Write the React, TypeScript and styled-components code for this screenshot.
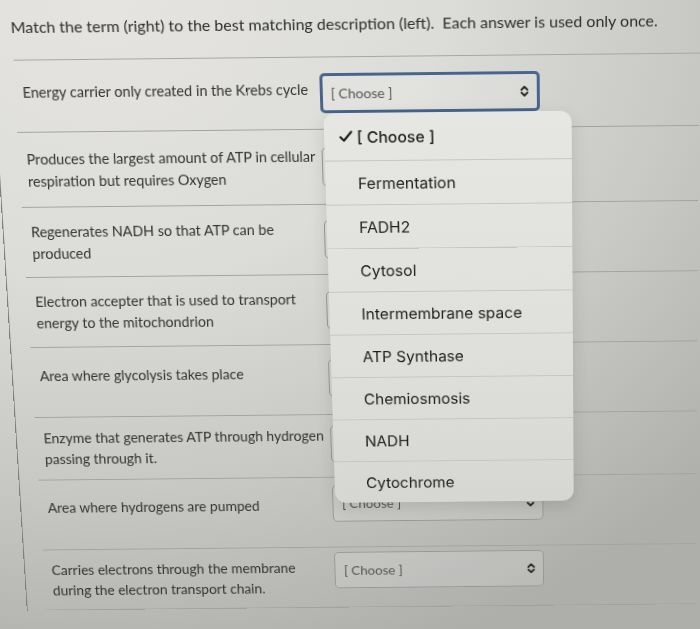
import React from 'react'
import styled, { createGlobalStyle } from 'styled-components'

const GlobalStyle = createGlobalStyle`
  html, body {
    margin: 0;
    padding: 0;
  }
  body {
    font-family: Lato, "Liberation Sans", sans-serif;
    background: #cfcfcb;
  }
`

const Page = styled.div`
  position: relative;
  width: 700px;
  height: 629px;
  overflow: hidden;
  background: radial-gradient(ellipse 120% 110% at 15% 0%, #e5e4e0 0%, #dcdcd8 40%, #c8c9c5 70%, #aeafab 100%);
`
// the reference is a photo of a screen: keystone tilt plus a small roll
const Sheet = styled.div`
  transform-origin: 520px 0;
  transform: perspective(1000px) rotateX(-5.7deg) rotateZ(-0.6deg);
  padding-top: 12px;
`
const Title = styled.div`
  padding-left: 9px;
  font-size: 16px;
  line-height: 20px;
  color: #2e2e2e;
  margin-bottom: 23px;
  white-space: nowrap;
`
const Divider = styled.div`
  margin-left: 10px;
  border-top: 1px solid #a6a6a2;
`
const List = styled.div`
  margin-left: -12px;
  border-left: 1px solid #7f807c;
`
const Row = styled.div<{ $h: number }>`
  display: flex;
  align-items: center;
  height: ${p => p.$h}px;
  margin-left: 20px;
  border-bottom: 1px solid #a2a29e;
  box-sizing: border-box;
`
const Desc = styled.div<{ $lift: number }>`
  width: 308px;
  box-sizing: border-box;
  padding-left: 8px;
  margin-bottom: ${p => p.$lift * 2}px;
  font-size: 14.6px;
  line-height: 23px;
  color: #333;
`
const SelectWrap = styled.div<{ $lift: number }>`
  position: relative;
  margin-bottom: ${p => p.$lift * 2}px;
`
const SelectBox = styled.div<{ $focus?: boolean }>`
  display: flex;
  align-items: center;
  justify-content: space-between;
  width: 222px;
  height: 41px;
  box-sizing: border-box;
  padding: 0 8px 0 ${p => (p.$focus ? 8 : 9)}px;
  border: ${p => (p.$focus ? '3px solid #47648e' : '1px solid #959896')};
  border-radius: 5px;
  background: rgba(255, 255, 255, 0.14);
  font-size: 14px;
  color: #555;
`
const Menu = styled.div`
  position: absolute;
  top: 100%;
  left: 3px;
  width: 251px;
  z-index: 10;
  border-radius: 12px;
  background: linear-gradient(180deg, #e6e6e2 0%, #dfdfdb 60%, #d6d6d2 100%);
  box-shadow: 0 6px 18px rgba(0, 0, 0, 0.12);
  overflow: hidden;
`
const Option = styled.div<{ $first?: boolean }>`
  display: flex;
  align-items: center;
  height: ${p => (p.$first ? 49 : 46)}px;
  padding-left: 15px;
  border-top: ${p => (p.$first ? 'none' : '1px solid #c5c5c1')};
  box-sizing: border-box;
  font-family: Inter, "Open Sans", sans-serif;
  font-size: 16px;
  font-weight: ${p => (p.$first ? 500 : 400)};
  color: #1d1d1d;
`
const CheckSlot = styled.span`
  display: inline-flex;
  width: 18px;
`

const UpDown = () => (
  <svg width="9" height="13" viewBox="0 0 9 13">
    <path d="M1.5 5 L4.5 2 L7.5 5 M1.5 8 L4.5 11 L7.5 8" fill="none" stroke="#2a2a2a" strokeWidth="2" strokeLinecap="round" strokeLinejoin="round" />
  </svg>
)

const Check = () => (
  <svg width="14" height="13" viewBox="0 0 14 13">
    <path d="M1.5 7 L5 10.5 L12.5 1.5" fill="none" stroke="#1d1d1d" strokeWidth="2.2" strokeLinecap="round" strokeLinejoin="round" />
  </svg>
)

const options = [
  'Fermentation',
  'FADH2',
  'Cytosol',
  'Intermembrane space',
  'ATP Synthase',
  'Chemiosmosis',
  'NADH',
  'Cytochrome',
]

const questions = [
  { text: 'Energy carrier only created in the Krebs cycle', h: 74, lift: 4, selLift: 0 },
  { text: 'Produces the largest amount of ATP in cellular respiration but requires Oxygen', h: 78, lift: 0, selLift: 0 },
  { text: 'Regenerates NADH so that ATP can be produced', h: 74, lift: 0, selLift: 0 },
  { text: 'Electron accepter that is used to transport energy to the mitochondrion', h: 75, lift: 0, selLift: 0 },
  { text: 'Area where glycolysis takes place', h: 76, lift: 7, selLift: 2 },
  { text: 'Enzyme that generates ATP through hydrogen passing through it.', h: 69, lift: 0, selLift: 3 },
  { text: 'Area where hydrogens are pumped', h: 78, lift: 8, selLift: 10 },
  { text: 'Carries electrons through the membrane during the electron transport chain.', h: 68, lift: 0, selLift: 8 },
]

const App: React.FC = () => (
  <Page>
    <GlobalStyle />
    <Sheet>
      <Title>Match the term (right) to the best matching description (left).&nbsp; Each answer is used only once.</Title>
      <Divider />
      <List>
        {questions.map((q, i) => (
          <Row key={i} $h={q.h}>
            <Desc $lift={q.lift}>{q.text}</Desc>
            <SelectWrap $lift={q.selLift}>
              <SelectBox $focus={i === 0}>
                <span>[ Choose ]</span>
                <UpDown />
              </SelectBox>
              {i === 0 && (
                <Menu>
                  <Option $first>
                    <CheckSlot>
                      <Check />
                    </CheckSlot>
                    [ Choose ]
                  </Option>
                  {options.map(o => (
                    <Option key={o}>
                      <CheckSlot />
                      {o}
                    </Option>
                  ))}
                </Menu>
              )}
            </SelectWrap>
          </Row>
        ))}
      </List>
    </Sheet>
  </Page>
)

export default App
